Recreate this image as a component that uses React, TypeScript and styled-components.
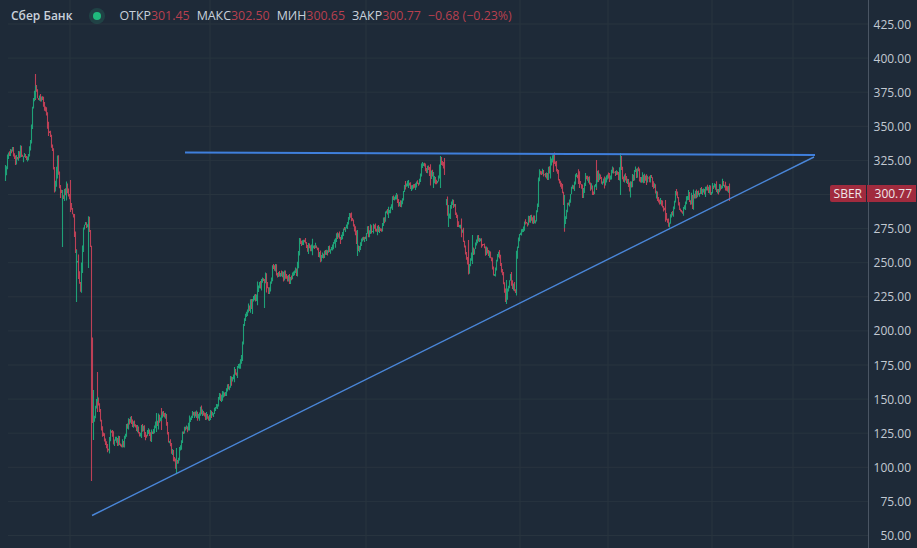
import React from "react";
import styled, { createGlobalStyle } from "styled-components";

const GlobalStyle = createGlobalStyle`
  html, body {
    margin: 0;
    padding: 0;
    height: 100%;
    overflow: hidden;
    background: #1e2a38;
  }
`;

const PRICES = [
  "425.00", "400.00", "375.00", "350.00", "325.00", "300.00", "275.00", "250.00",
  "225.00", "200.00", "175.00", "150.00", "125.00", "100.00", "75.00", "50.00",
];

const GRID_Y = PRICES.map((_, i) => 24 + i * 34.1);
const GRID_X = [70, 210, 366, 520, 608, 712, 793];

// traced closing prices, in chart pixels
const TRACE: [number, number][] = [
  [5, 178], [7, 155], [12, 150], [15, 160], [20, 152], [25, 158], [28, 157], [30, 145], [32, 112], [35, 85],
  [37, 98], [42, 100], [45, 112], [48, 128], [52, 148], [54, 188], [57, 158], [59, 185], [62, 198], [66, 188],
  [70, 200], [73, 218], [75, 250], [78, 272], [80, 290], [83, 228], [85, 226], [88, 222], [90, 245], [91, 340],
  [92, 425], [97, 398], [99, 412], [101, 432], [106, 442], [108, 450], [110, 428], [113, 440], [118, 442],
  [123, 444], [128, 418], [131, 422], [135, 427], [140, 432], [143, 430], [150, 436], [157, 422], [161, 414],
  [165, 416], [168, 442], [172, 452], [175, 466], [178, 456], [182, 436], [187, 426], [190, 417], [197, 414],
  [200, 411], [205, 419], [210, 413], [215, 411], [218, 397], [225, 393], [228, 386], [232, 376], [238, 370],
  [241, 362], [243, 326], [247, 310], [250, 305], [253, 300], [256, 295], [258, 285], [262, 280], [265, 279],
  [267, 290], [270, 285], [272, 267], [278, 273], [282, 276], [285, 275], [288, 281], [293, 273], [297, 270],
  [299, 240], [303, 242], [307, 249], [312, 246], [315, 246], [318, 255], [321, 258], [326, 252], [330, 246],
  [335, 239], [338, 237], [342, 233], [346, 230], [350, 214], [353, 226], [355, 236], [357, 250], [362, 240],
  [366, 234], [370, 229], [374, 226], [378, 232], [381, 227], [384, 218], [387, 211], [391, 207], [393, 195],
  [400, 203], [405, 185], [412, 186], [417, 185], [422, 165], [427, 170], [430, 175], [437, 182], [440, 157],
  [444, 168],
];

const TRACE_2: [number, number][] = [
  [446, 203], [448, 218], [452, 199], [457, 224], [460, 222], [463, 240], [468, 268], [472, 253], [477, 235],
  [483, 248], [490, 256], [493, 277], [498, 252], [503, 280], [505, 298], [510, 279], [515, 293], [516, 250],
  [518, 238], [520, 232], [525, 222], [530, 219], [535, 222], [537, 205], [538, 177], [540, 171], [545, 178],
  [550, 166], [553, 158], [556, 170], [560, 185], [562, 192], [564, 222], [566, 210], [570, 195], [575, 177],
  [578, 176], [582, 195], [585, 179], [590, 185], [593, 194], [597, 176], [600, 180], [605, 182], [610, 175],
  [612, 172], [615, 170], [618, 178], [620, 160], [622, 183], [625, 176], [628, 189], [633, 176], [637, 171],
  [640, 179], [645, 178], [650, 178], [655, 190], [660, 204], [665, 214], [668, 221], [672, 215], [675, 191],
  [680, 213], [683, 209], [687, 196], [692, 200], [695, 195], [700, 190], [705, 190], [710, 191], [713, 186],
  [718, 190], [722, 184], [725, 188], [730, 194],
];

// long wicks that stick out of the trace: x, top, bottom
const RED_WICKS: [number, number, number][] = [
  [35, 74, 100], [91, 300, 481], [97, 372, 412], [70, 180, 212], [161, 408, 430], [468, 240, 274],
  [553, 154, 172], [444, 158, 175], [596, 160, 190],
];
const GREEN_WICKS: [number, number, number][] = [
  [5, 165, 181], [62, 190, 247], [76, 250, 302], [88, 218, 268], [93, 390, 440], [176, 448, 473],
  [264, 283, 308], [357, 230, 256], [433, 172, 188], [440, 156, 188], [448, 205, 227], [564, 195, 228],
  [620, 153, 195], [472, 235, 264], [506, 280, 304],
];

const seeded = (seed: number) => {
  let s = seed;
  return () => {
    s = (s * 16807) % 2147483647;
    return (s - 1) / 2147483646;
  };
};

const buildCandles = (trace: [number, number][], seed: number) => {
  const rand = seeded(seed);
  const up: string[] = [];
  const down: string[] = [];
  let prev = trace[0][1];
  for (let i = 0; i < trace.length - 1; i++) {
    const [x0, y0] = trace[i];
    const [x1, y1] = trace[i + 1];
    for (let x = x0; x < x1; x++) {
      const y = y0 + ((y1 - y0) * (x - x0)) / (x1 - x0) + (rand() - 0.5) * 8;
      const spike = rand() < 0.12 ? rand() * 7 : 0;
      const top = Math.min(prev, y) - rand() * 3 - (rand() < 0.5 ? spike : 0);
      const bottom = Math.max(prev, y) + rand() * 3 + spike;
      (y < prev ? up : down).push(`M${x + 0.5} ${top.toFixed(1)}V${bottom.toFixed(1)}`);
      prev = y;
    }
  }
  return { up: up.join(""), down: down.join("") };
};

const wickPath = (wicks: [number, number, number][]) =>
  wicks.map(([x, top, bottom]) => `M${x + 0.5} ${top}V${bottom}`).join("");

const first = buildCandles(TRACE, 4711);
const second = buildCandles(TRACE_2, 1931);

const Page = styled.div`
  display: flex;
  width: 917px;
  height: 548px;
  overflow: hidden;
  background: #1e2a38;
  font-family: "Open Sans", "Liberation Sans", sans-serif;
`;

const ChartPane = styled.div`
  position: relative;
  flex: 0 0 868px;
  height: 548px;
`;

const Plot = styled.svg`
  display: block;
  width: 868px;
  height: 548px;
`;

const Candles = styled.g`
  fill: none;
  stroke-width: 1.1;
  opacity: 0.85;
  filter: blur(0.5px);
`;

const Legend = styled.div`
  position: absolute;
  top: 8px;
  left: 11px;
  display: flex;
  align-items: center;
  font-size: 12.4px;
  line-height: 16px;
  color: #c9d1db;
  white-space: nowrap;
`;

const Symbol = styled.span`
  font-size: 12px;
  font-weight: 600;
  margin-right: 17px;
`;

const Status = styled.span`
  display: flex;
  align-items: center;
  justify-content: center;
  width: 16px;
  height: 16px;
  margin-right: 14px;
  border-radius: 50%;
  background: rgba(38, 166, 124, 0.2);
`;

const StatusDot = styled.span`
  width: 8px;
  height: 8px;
  border-radius: 50%;
  background: #1fbb7d;
`;

const Metric = styled.span`
  margin-right: 7px;
`;

const Value = styled.span`
  color: #b8404f;
`;

const Axis = styled.div`
  display: flex;
  flex-direction: column;
  flex: 0 0 49px;
  height: 548px;
  padding-top: 7.6px;
  box-sizing: border-box;
  border-left: 1px solid #4a5563;
`;

const AxisLabel = styled.div`
  flex: 0 0 34.1px;
  height: 34.1px;
  line-height: 34.1px;
  padding-right: 6px;
  text-align: right;
  font-size: 12px;
  color: #c2c9d2;
`;

const PriceTag = styled.div`
  position: absolute;
  top: 185px;
  right: 1px;
  display: flex;
  height: 17px;
  line-height: 17px;
  font-size: 12px;
  color: #efe6e8;
`;

const TagName = styled.span`
  padding: 0 4px;
  margin-right: 1px;
  border-radius: 2px 0 0 2px;
  background: #a12b3e;
`;

const TagPrice = styled.span`
  width: 49px;
  padding-right: 4px;
  box-sizing: border-box;
  text-align: right;
  background: #a12b3e;
`;

const App = () => (
  <>
    <GlobalStyle />
    <Page>
      <ChartPane>
        <Plot viewBox="0 0 868 548">
          {GRID_Y.map((y) => (
            <line key={y} x1="8" x2="868" y1={y} y2={y} stroke="#28343f" strokeWidth="1" />
          ))}
          {GRID_X.map((x) => (
            <line key={x} x1={x} x2={x} y1="0" y2="548" stroke="#28343f" strokeWidth="1" />
          ))}
          <Candles>
            <path d={first.down + second.down + wickPath(RED_WICKS)} stroke="#d9455c" />
            <path d={first.up + second.up + wickPath(GREEN_WICKS)} stroke="#1fb583" />
          </Candles>
          <line x1="185" y1="152.5" x2="815" y2="155" stroke="#3f7fdc" strokeWidth="2" />
          <line x1="92" y1="515.5" x2="814" y2="157" stroke="#4a86d8" strokeWidth="1.4" />
        </Plot>
        <Legend>
          <Symbol>Сбер Банк</Symbol>
          <Status>
            <StatusDot />
          </Status>
          <Metric>ОТКР<Value>301.45</Value></Metric>
          <Metric>МАКС<Value>302.50</Value></Metric>
          <Metric>МИН<Value>300.65</Value></Metric>
          <Metric>ЗАКР<Value>300.77</Value></Metric>
          <Value>−0.68 (−0.23%)</Value>
        </Legend>
      </ChartPane>
      <Axis>
        {PRICES.map((price) => (
          <AxisLabel key={price}>{price}</AxisLabel>
        ))}
      </Axis>
      <PriceTag>
        <TagName>SBER</TagName>
        <TagPrice>300.77</TagPrice>
      </PriceTag>
    </Page>
  </>
);

export default App;
